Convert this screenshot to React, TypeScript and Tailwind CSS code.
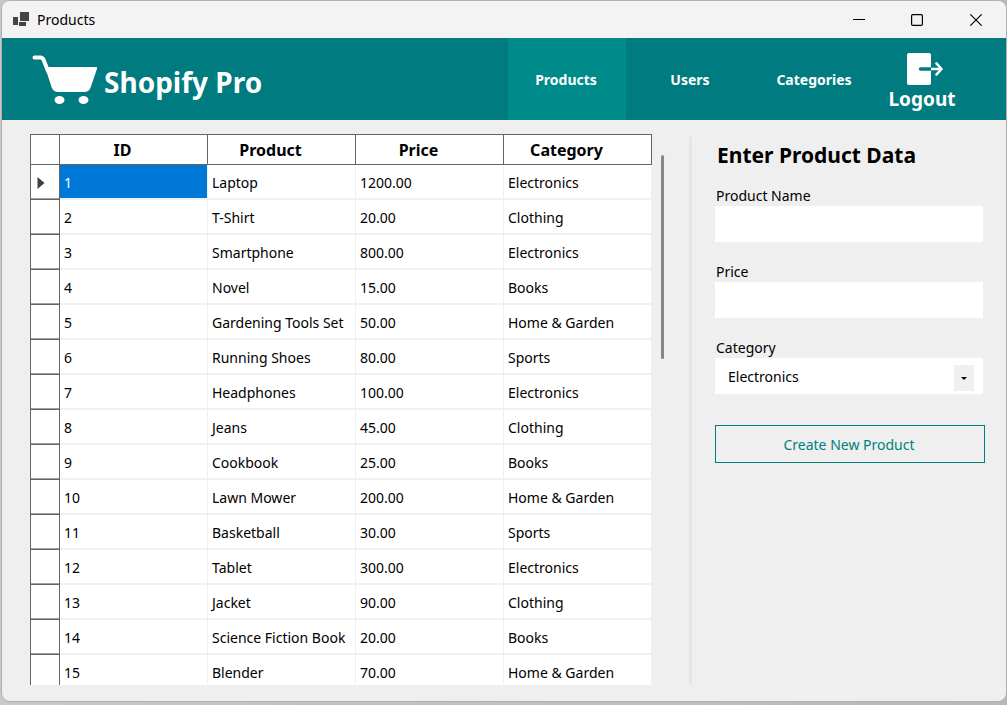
import { useState } from "react";

type Product = {
  id: number;
  name: string;
  price: string;
  category: string;
};

const products: Product[] = [
  { id: 1, name: "Laptop", price: "1200.00", category: "Electronics" },
  { id: 2, name: "T-Shirt", price: "20.00", category: "Clothing" },
  { id: 3, name: "Smartphone", price: "800.00", category: "Electronics" },
  { id: 4, name: "Novel", price: "15.00", category: "Books" },
  { id: 5, name: "Gardening Tools Set", price: "50.00", category: "Home & Garden" },
  { id: 6, name: "Running Shoes", price: "80.00", category: "Sports" },
  { id: 7, name: "Headphones", price: "100.00", category: "Electronics" },
  { id: 8, name: "Jeans", price: "45.00", category: "Clothing" },
  { id: 9, name: "Cookbook", price: "25.00", category: "Books" },
  { id: 10, name: "Lawn Mower", price: "200.00", category: "Home & Garden" },
  { id: 11, name: "Basketball", price: "30.00", category: "Sports" },
  { id: 12, name: "Tablet", price: "300.00", category: "Electronics" },
  { id: 13, name: "Jacket", price: "90.00", category: "Clothing" },
  { id: 14, name: "Science Fiction Book", price: "20.00", category: "Books" },
  { id: 15, name: "Blender", price: "70.00", category: "Home & Garden" },
];

const categories = ["Electronics", "Clothing", "Books", "Home & Garden", "Sports"];
const columns = ["ID", "Product", "Price", "Category"];
const pages = ["Products", "Users", "Categories"];

function TitleBar() {
  return (
    <div className="flex h-[37px] shrink-0 items-center bg-[#f3f3f3] pl-[11px]">
      <svg width="16" height="16" viewBox="0 0 16 16" aria-hidden="true" fill="#444444">
        <rect x="0" y="5" width="5" height="8" />
        <rect x="7" y="0" width="9" height="9" />
        <path d="M6 10H13V14H6Z" />
      </svg>
      <span className="ml-2 text-sm leading-5">Products</span>
      <div className="ml-auto flex h-full">
        <button aria-label="Minimize" className="flex w-[58px] items-center justify-center">
          <svg width="12" height="12" viewBox="0 0 12 12" fill="none" stroke="#000">
            <path d="M0 5.5H12" />
          </svg>
        </button>
        <button aria-label="Maximize" className="flex w-[58px] items-center justify-center">
          <svg width="12" height="12" viewBox="0 0 12 12" fill="none" stroke="#000" strokeWidth="1.2">
            <rect x="0.6" y="0.6" width="10.8" height="10.8" rx="1.2" />
          </svg>
        </button>
        <button aria-label="Close" className="flex w-[60px] items-center justify-center">
          <svg width="12" height="12" viewBox="0 0 12 12" fill="none" stroke="#000" strokeWidth="1.1">
            <path d="M0.3 0.3L11.7 11.7M11.7 0.3L0.3 11.7" />
          </svg>
        </button>
      </div>
    </div>
  );
}

function Header() {
  return (
    <header className="flex h-[82px] shrink-0 bg-[#007b7f] text-white">
      <div className="flex items-center pl-[30px] pt-0.5">
        <svg width="66" height="50" viewBox="0 0 66 50" aria-hidden="true">
          <path
            d="M2.5 2.5H8.2C10 2.5 10.9 3.2 11.6 5L16 16"
            fill="none"
            stroke="#fff"
            strokeWidth="4"
            strokeLinecap="round"
          />
          <path
            d="M13 12H64.3C65 12 65.3 12.7 65.1 13.6L58.6 32.6C57.6 35.6 55.5 37 52.5 37H26C23 37 20.8 35.6 19.7 32.6Z"
            fill="#fff"
          />
          <ellipse cx="27.5" cy="45" rx="5" ry="4" fill="#fff" />
          <ellipse cx="51.5" cy="45" rx="5" ry="4" fill="#fff" />
        </svg>
        <h1 className="ml-1.5 pt-1 text-[28px] leading-9 font-bold">Shopify Pro</h1>
      </div>
      <nav className="ml-auto flex gap-[6px]">
        {pages.map((page) => (
          <a
            key={page}
            href={"#" + page.toLowerCase()}
            className={
              page === "Products"
                ? "flex w-[118px] items-center justify-center bg-[#008b8b] pt-0.5 pr-0.5 text-sm font-bold"
                : "flex w-[118px] items-center justify-center pt-0.5 pr-0.5 text-sm font-bold"
            }
          >
            {page}
          </a>
        ))}
      </nav>
      <button className="mr-[49px] ml-[13px] flex w-[70px] flex-col items-center pt-[14px]">
        <svg width="36" height="34" viewBox="0 0 36 34" aria-hidden="true" className="ml-1.5">
          <rect x="0" y="1" width="24" height="32" rx="2" fill="#fff" />
          <path d="M13.5 17H24" stroke="#007b7f" strokeWidth="3.4" strokeLinecap="round" />
          <path d="M24 17H34" stroke="#fff" strokeWidth="2.4" />
          <path
            d="M29.5 11.5L34.5 17L29.5 22.5"
            fill="none"
            stroke="#fff"
            strokeWidth="2.6"
            strokeLinecap="round"
            strokeLinejoin="round"
          />
        </svg>
        <span className="text-[19px] leading-[26px] font-bold">Logout</span>
      </button>
    </header>
  );
}

function ProductTable() {
  return (
    <div className="min-h-0 flex-1 overflow-y-auto [scrollbar-width:none]">
      <table className="w-full table-fixed border-separate border-spacing-0 border-l border-[#646464] text-left">
        <colgroup>
          <col className="w-[29px]" />
          <col />
          <col />
          <col />
          <col />
        </colgroup>
        <thead>
          <tr className="h-[31px] bg-white text-base">
            <th aria-label="Row" className="border-y border-r border-[#646464] p-0" />
            {columns.map((column) => (
              <th
                key={column}
                scope="col"
                className="border-y border-r border-[#646464] py-0 pr-[22px] pl-0 text-center leading-5 font-bold"
              >
                {column}
              </th>
            ))}
          </tr>
        </thead>
        <tbody>
          {products.map((product) => {
            const current = product.id === 1;
            return (
              <tr key={product.id} className="h-[35px] bg-white text-sm">
                <td className="border-r border-b border-[#646464] p-0 shadow-[inset_0_-1px_#a0a0a0]">
                  {current && (
                    <svg width="8" height="12" viewBox="0 0 8 12" className="mt-0.5 ml-1.5" aria-label="Current row">
                      <path d="M0.5 0L7.5 6L0.5 12Z" fill="#404040" />
                    </svg>
                  )}
                </td>
                <td
                  className={
                    current
                      ? "border-r border-b-2 border-[#f0f0f0] bg-[#0078d7] px-1 pt-0.5 pb-0 text-white"
                      : "border-r border-b-2 border-[#f0f0f0] px-1 pt-0.5 pb-0"
                  }
                >
                  {product.id}
                </td>
                <td className="border-r border-b-2 border-[#f0f0f0] px-1 pt-0.5 pb-0 whitespace-nowrap">
                  {product.name}
                </td>
                <td className="border-r border-b-2 border-[#f0f0f0] px-1 pt-0.5 pb-0">{product.price}</td>
                <td className="border-r border-b-2 border-[#f0f0f0] px-1 pt-0.5 pb-0">{product.category}</td>
              </tr>
            );
          })}
        </tbody>
      </table>
    </div>
  );
}

function ProductForm() {
  const [name, setName] = useState("");
  const [price, setPrice] = useState("");
  const [category, setCategory] = useState("Electronics");

  return (
    <form className="flex w-[270px] flex-col" onSubmit={(event) => event.preventDefault()}>
      <h2 className="mt-[6px] mb-[16px] pl-0.5 text-[21px] leading-[30px] font-bold">Enter Product Data</h2>
      <label htmlFor="name" className="pl-px text-sm leading-5">
        Product Name
      </label>
      <input
        id="name"
        value={name}
        onChange={(event) => setName(event.target.value)}
        className="mb-5 h-9 w-[268px] bg-white px-3 text-sm outline-none"
      />
      <label htmlFor="price" className="pl-px text-sm leading-5">
        Price
      </label>
      <input
        id="price"
        value={price}
        onChange={(event) => setPrice(event.target.value)}
        className="mb-5 h-9 w-[268px] bg-white px-3 text-sm outline-none"
      />
      <label htmlFor="category" className="pl-px text-sm leading-5">
        Category
      </label>
      <div className="relative w-[268px]">
        <select
          id="category"
          value={category}
          onChange={(event) => setCategory(event.target.value)}
          className="block h-9 w-full appearance-none bg-white px-[13px] pt-0.5 text-sm outline-none"
        >
          {categories.map((item) => (
            <option key={item}>{item}</option>
          ))}
        </select>
        <span className="pointer-events-none absolute top-[7px] right-[9px] flex h-[26px] w-5 items-center justify-center bg-[#f0f0f0]">
          <svg width="6" height="3" viewBox="0 0 6 3" aria-hidden="true">
            <path d="M0 0H6L3 3Z" fill="#000" />
          </svg>
        </span>
      </div>
      <button type="submit" className="mt-[31px] h-[38px] border border-[#008080] pt-0.5 pr-0.5 text-sm text-[#008080]">
        Create New Product
      </button>
    </form>
  );
}

export default function App() {
  return (
    <div className="h-screen bg-linear-to-r from-[#c8c8c8] to-[#b8b8b8] pb-[3px] pl-px font-['Noto_Sans',sans-serif] text-black">
      <div className="flex h-full flex-col overflow-hidden rounded-[9px] border border-[#b0b0b0] bg-[#efefef]">
        <TitleBar />
        <Header />
        <main className="flex min-h-0 flex-1 pt-[14px] pr-[21px] pb-4 pl-7">
          <ProductTable />
          <div className="mt-[21px] ml-[9px] h-[204px] w-[3px] shrink-0 rounded-full bg-[#868686]" />
          <div className="mt-[3px] mr-[23px] ml-[25px] w-[3px] shrink-0 bg-[#e5e5e5]" />
          <ProductForm />
        </main>
      </div>
    </div>
  );
}
